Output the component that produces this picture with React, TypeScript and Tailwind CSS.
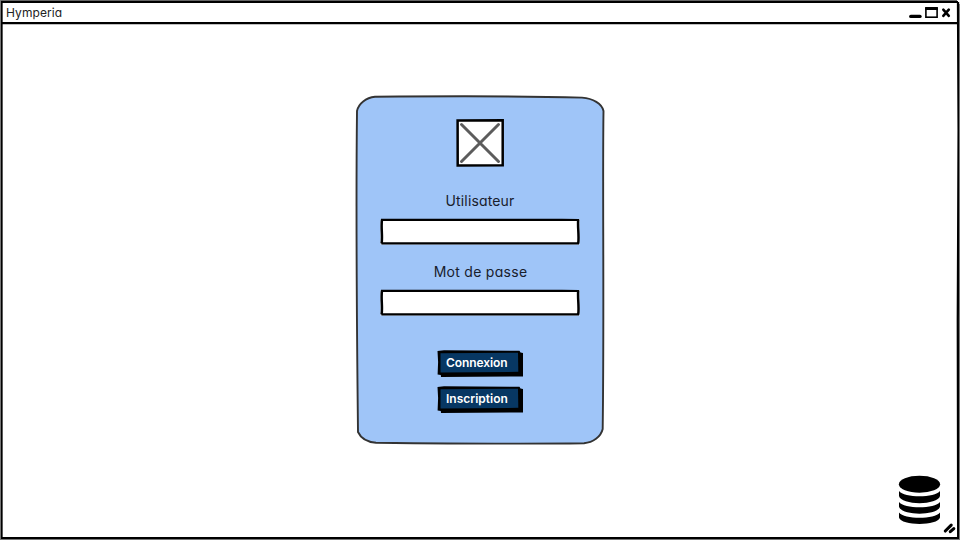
import React from "react";

const SketchField = ({ label, password }: { label: string; password?: boolean }) => (
  <label className="flex w-[200px] flex-col items-center">
    <span className={`h-[27px] text-[14px] leading-[20px] whitespace-nowrap text-[#18202c] ${password ? "pl-px tracking-[0.28px]" : "tracking-[0.15px]"}`}>
      {label}
    </span>
    <span className="relative h-[27px] w-[200px]">
      <svg className="absolute inset-0" width="200" height="27" viewBox="0 0 200 27" fill="none" stroke="#000">
        <path d="M.5 1H199.5V26.5H.5Z" fill="#fff" stroke="none" />
        <path d="M1 1.8C60 2.2 130 1.4 199 2" strokeWidth="2.2" />
        <path d="M1.4 25.4C60 24.8 130 25.8 199 25.4" strokeWidth="2.2" />
        <path d="M2 1.5C.8 9 2.8 18 1.6 25.5M198.2 1.5C197.5 9 199.3 18 198.2 25.5" strokeWidth="2.5" />
      </svg>
      <input type={password ? "password" : "text"} className="relative h-full w-full bg-transparent px-2 text-sm outline-none" />
    </span>
  </label>
);

const SketchButton = ({ label, tracking }: { label: string; tracking: string }) => (
  <button className="relative h-[27px] w-[86px] text-left">
    <svg className="absolute inset-0" width="86" height="27" viewBox="0 0 86 27">
      <path d="M.5 1L7 .2 82.5 .8 83.5 2.5 86 3V26.5L4 27 3.8 25 .6 24.6 1.1 12Z" fill="#000" />
      <path d="M3.5 3.2L81 2.7 81.3 21.8 3.5 22.6Z" fill="#073763" />
    </svg>
    <span className={`relative block pb-[2px] pl-[9px] text-[12px] leading-[24px] font-semibold whitespace-nowrap text-white ${tracking}`}>{label}</span>
  </button>
);

export default function App() {
  return (
    <div className="relative flex h-[540px] w-[960px] flex-col overflow-hidden bg-white font-['Inter','Liberation_Sans',sans-serif] [font-feature-settings:'cv11']">
      <svg className="pointer-events-none absolute inset-0" width="960" height="540" fill="none" stroke="#000">
        <path d="M0 .5H957" stroke="#666" />
        <path d="M1 2H958" strokeWidth="2" />
        <path d="M1.5 1V539M958 2L958.6 130 957.8 320 958.2 539" strokeWidth="2.3" />
        <path d="M0 23.1H958" strokeWidth="2.2" />
        <path d="M1 538H959" strokeWidth="2.2" />
        <path d="M.5 0V540M959.5 4V540M0 539.5H960" stroke="#777" strokeWidth="1" />
      </svg>

      <header className="flex h-6 shrink-0 items-center justify-between pt-[2px] pr-[9px] pl-[6px]">
        <span className="text-[12px] leading-[20px] tracking-[0.08px] text-[#222]">Hymperia</span>
        <svg width="42" height="14" viewBox="0 0 42 14" fill="none" stroke="#000">
          <path d="M1.8 10.4H11" strokeWidth="3.4" strokeLinecap="round" />
          <rect x="16.9" y="2.2" width="11.2" height="9" strokeWidth="1.6" />
          <path d="M16.2 2.5H28.8" strokeWidth="3" />
          <path d="M34.3 3.6L39.8 9.8M39.8 3.6L34.3 9.8" strokeWidth="2.6" strokeLinecap="round" />
        </svg>
      </header>

      <main className="flex flex-1 justify-center pt-[71px]">
        <section className="relative flex h-[350px] w-[250px] flex-col items-center pt-[24px]">
          <svg className="absolute inset-0" width="250" height="350" viewBox="0 0 250 350">
            <path
              d="M20 1.8C80 1.2 165 1 227 2.6 238 3.5 247 8.5 248.5 16C247.4 90 249.3 210 247.7 334C245.8 342 238 347.5 229 348.3C160 349.2 90 348.5 21 347.7C12 347 5.5 342.5 3 337C1.8 230 .8 120 2 16C3.5 8.5 11 2.8 20 1.8Z"
              fill="#9fc5f8"
              stroke="#333"
              strokeWidth="1.9"
            />
          </svg>
          <svg className="relative" width="48" height="48" viewBox="0 0 48 48" fill="none">
            <path d="M1.6 1.5L46.7 1.3 46.7 46.3 1.7 46.6Z" fill="#fff" stroke="#000" strokeWidth="2.5" />
            <path d="M5.5 5.5L42.5 42.5M42.5 5.5L5.5 42.5" stroke="#5c5c5c" strokeWidth="3" strokeLinecap="round" />
          </svg>
          <form className="relative mt-[24px] flex flex-col items-center">
            <SketchField label="Utilisateur" />
            <div className="h-[17px]" />
            <SketchField label="Mot de passe" password />
            <div className="mt-[34px] flex flex-col gap-[9px]">
              <SketchButton label="Connexion" tracking="tracking-[-0.1px]" />
              <SketchButton label="Inscription" tracking="tracking-[0px]" />
            </div>
          </form>
        </section>
      </main>

      <footer className="flex h-[66px] shrink-0 items-start justify-end pr-[3px]">
        <svg width="60" height="62" viewBox="897 474 60 62">
          <g fill="#000">
            <ellipse cx="919.5" cy="484.2" rx="20.6" ry="8.5" />
            <path d="M899 491C904 498 935 498 940 491V496C938 505.5 901 505.5 899 496Z" />
            <path d="M899 502C904 509 935 509 940 502V506.5C938 516 901 516 899 506.5Z" />
            <path d="M899 512.5C904 519.5 935 519.5 940 512.5V517.5C938 526 901 526 899 517.5Z" />
          </g>
          <path d="M945.3 531L951.2 525.2M950.3 531.7L953.8 528.6" stroke="#000" strokeWidth="3.1" strokeLinecap="round" />
        </svg>
      </footer>
    </div>
  );
}
